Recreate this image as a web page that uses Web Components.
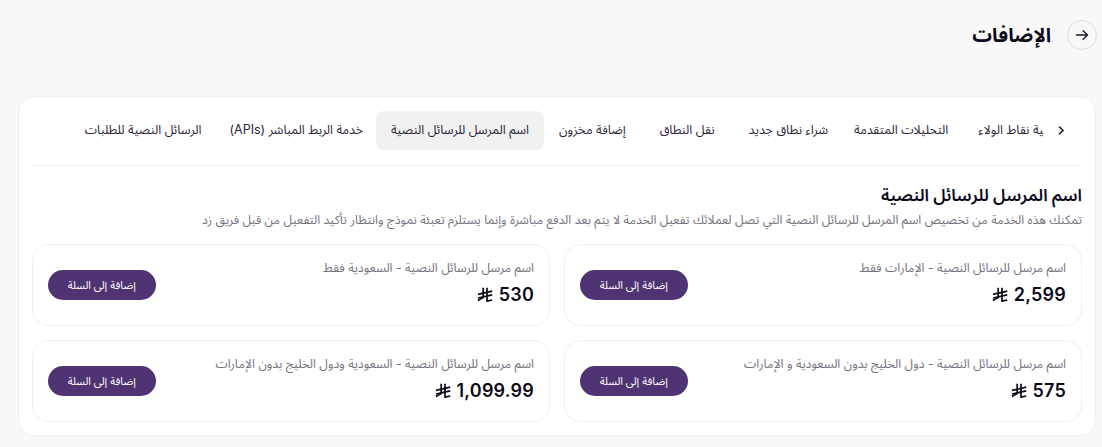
<!DOCTYPE html>
<html lang="ar" dir="rtl"><head><meta charset="utf-8">
<style>
html,body{margin:0;height:447px;overflow:hidden;background:#f8f8f9;font-family:"Inter","Noto Sans Arabic","DejaVu Sans",sans-serif}
</style></head><body>
<addons-page></addons-page>
<script>
const FONT='"Inter","Noto Sans Arabic","DejaVu Sans",sans-serif';
customElements.define('riyal-icon',class extends HTMLElement{constructor(){super();this.attachShadow({mode:'open'}).innerHTML=`<style>:host{display:inline-flex}</style>
<svg width="16" height="16" viewBox="0 0 16 16" fill="none" stroke="#0d0a1a" stroke-width="1.7" stroke-linejoin="round"><path d="M6.2 .8V10.6L.8 13.6"/><path d="M10 .8V14.2L15.2 13"/><path d="M1 7.4l14.2-3.2M1 11l14.2-3.2"/></svg>`}});
customElements.define('back-button',class extends HTMLElement{constructor(){super();this.attachShadow({mode:'open'}).innerHTML=`<style>:host{display:flex;width:30px;height:30px;border:1px solid #dcdbe4;border-radius:50%;align-items:center;justify-content:center;box-sizing:border-box}</style>
<svg width="14" height="14" viewBox="0 0 14 14" fill="none" stroke="#1a1626" stroke-width="1.4" stroke-linecap="round" stroke-linejoin="round"><path d="M1.5 7h11M8.2 2.8 12.5 7l-4.3 4.2"/></svg>`}});
customElements.define('tab-item',class extends HTMLElement{constructor(){super();this.attachShadow({mode:'open'}).innerHTML=`<style>:host{display:flex;flex:none;align-items:center;height:39px;padding:0 15px 2px;border-radius:8px;font-size:12.5px;color:#2c2438;white-space:nowrap;box-sizing:border-box}:host([active]){background:#f1f1f1}</style><slot></slot>`}});
customElements.define('tab-strip',class extends HTMLElement{constructor(){super();this.attachShadow({mode:'open'}).innerHTML=`<style>:host{display:flex;align-items:center;height:39px;border-bottom:1px solid #f1f1f3;padding-bottom:15px}
.chev{flex:none;width:39px;display:flex;justify-content:center;align-items:center;padding-inline-start:4px;box-sizing:border-box}
.view{flex:1;overflow:hidden;min-width:0}.track{display:flex;margin-inline-start:-38px}</style>
<div class="chev"><svg width="8" height="11" viewBox="0 0 8 11" fill="none" stroke="#2c2438" stroke-width="1.7"><path d="M2 1.5l4 4-4 4"/></svg></div>
<div class="view"><div class="track"><slot></slot></div></div>`}});
customElements.define('addon-card',class extends HTMLElement{constructor(){super();this.attachShadow({mode:'open'}).innerHTML=`<style>:host{display:flex;align-items:center;justify-content:space-between;height:82px;box-sizing:border-box;border:1px solid #f0f0f2;border-radius:16px;padding:0 15px}
.text{padding-bottom:6px}
.name{font-size:12.3px;color:#736f7c;line-height:20px}.price{display:flex;align-items:center;gap:6px;margin-top:5px;font-size:18px;letter-spacing:.2px;font-weight:600;color:#0d0a1a;line-height:24px}
button{all:unset;width:107.5px;height:30px;border-radius:15px;background:#4f3372;color:#fff;font-size:10.8px;text-align:center;font-family:${FONT}}</style>
<div class="text"><div class="name"><slot name="name"></slot></div><div class="price"><span dir="ltr"><slot name="price"></slot></span><riyal-icon></riyal-icon></div></div><button>إضافة إلى السلة</button>`}});
customElements.define('addons-page',class extends HTMLElement{constructor(){super();this.attachShadow({mode:'open'}).innerHTML=`<style>:host{display:block;padding:20px 6px 0 18px;font-family:${FONT}}
header{display:flex;align-items:center;gap:16px;height:30px;margin-right:-1px}h1{margin:0;font-size:19.5px;font-weight:700;color:#0d0a1a}
.panel{margin-top:46px;background:#fff;border:1px solid #f0f0f2;border-radius:16px;padding:14px 13px;height:340px;box-sizing:border-box}
h2{margin:17px 0 0;font-size:17px;font-weight:600;color:#0d0a1a;line-height:24px}p{margin:3px 0 0;font-size:12.27px;color:#736f7c;line-height:20px}
.grid{display:grid;grid-template-columns:1fr 1fr;gap:14px;margin-top:14px}
</style>
<header><back-button></back-button><h1>الإضافات</h1></header>
<section class="panel"><tab-strip>
<tab-item>خاصية نقاط الولاء</tab-item><tab-item style="margin-inline-end:-4px">التحليلات المتقدمة</tab-item><tab-item>شراء نطاق جديد</tab-item><tab-item style="margin-inline:4px">نقل النطاق</tab-item><tab-item>إضافة مخزون</tab-item><tab-item active style="margin-inline-end:-2px">اسم المرسل للرسائل النصية</tab-item><tab-item style="margin-inline-end:-2px">خدمة الربط المباشر (APIs)</tab-item><tab-item>الرسائل النصية للطلبات</tab-item>
</tab-strip>
<h2>اسم المرسل للرسائل النصية</h2>
<p>تمكنك هذه الخدمة من تخصيص اسم المرسل للرسائل النصية التي تصل لعملائك تفعيل الخدمة لا يتم بعد الدفع مباشرة وإنما يستلزم تعبئة نموذج وانتظار تأكيد التفعيل من قبل فريق زد</p>
<div class="grid">
<addon-card><span slot="name">اسم مرسل للرسائل النصية - الإمارات فقط</span><span slot="price">2,599</span></addon-card>
<addon-card><span slot="name">اسم مرسل للرسائل النصية - السعودية فقط</span><span slot="price">530</span></addon-card>
<addon-card><span slot="name">اسم مرسل للرسائل النصية - دول الخليج بدون السعودية و الإمارات</span><span slot="price">575</span></addon-card>
<addon-card><span slot="name">اسم مرسل للرسائل النصية - السعودية ودول الخليج بدون الإمارات</span><span slot="price">1,099.99</span></addon-card>
</div></section>`}});
</script></body></html>
